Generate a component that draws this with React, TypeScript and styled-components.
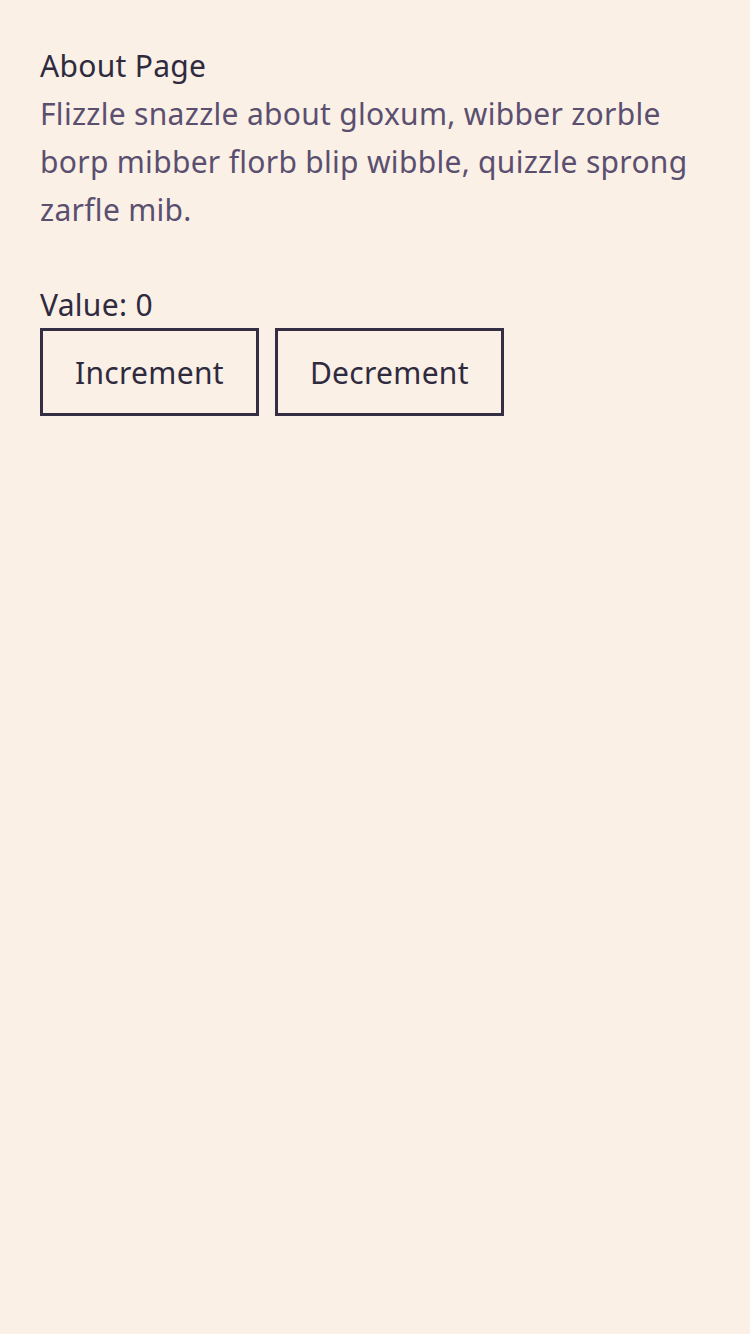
import React, { useState } from 'react'
import styled, { createGlobalStyle } from 'styled-components'

const GlobalStyle = createGlobalStyle`
  html, body {
    margin: 0;
    padding: 0;
    background: #faf0e6;
  }
  body {
    font-family: "Noto Sans", "DejaVu Sans", sans-serif;
    letter-spacing: 0.3px;
  }
`

const Page = styled.div`
  min-height: 1334px;
  box-sizing: border-box;
  padding: 42px 40px;
  background: #faf0e6;
`

const Title = styled.div`
  font-size: 30px;
  line-height: 48px;
  color: #2f2a3e;
`

const Text = styled.p`
  margin: 0 0 48px;
  font-size: 30px;
  line-height: 48px;
  color: #5b4f70;
`

const Value = styled.div`
  font-size: 30px;
  line-height: 46px;
  color: #2f2a3e;
`

const Buttons = styled.div`
  display: flex;
  gap: 16px;
`

const Button = styled.button`
  box-sizing: border-box;
  height: 88px;
  padding: 0 32px;
  border: 3px solid #342e45;
  background: transparent;
  font-family: inherit;
  font-size: 30px;
  letter-spacing: inherit;
  color: #2f2a3e;
  cursor: pointer;
`

export default function App() {
  const [value, setValue] = useState(0)

  return <Page>
    <GlobalStyle />
    <Title>About Page</Title>
    <Text>
      Flizzle snazzle about gloxum, wibber zorble borp mibber florb blip wibble, quizzle sprong zarfle mib.
    </Text>
    <Value>Value: {value}</Value>
    <Buttons>
      <Button onClick={() => setValue(value + 1)}>Increment</Button>
      <Button onClick={() => setValue(value - 1)}>Decrement</Button>
    </Buttons>
  </Page>
}
